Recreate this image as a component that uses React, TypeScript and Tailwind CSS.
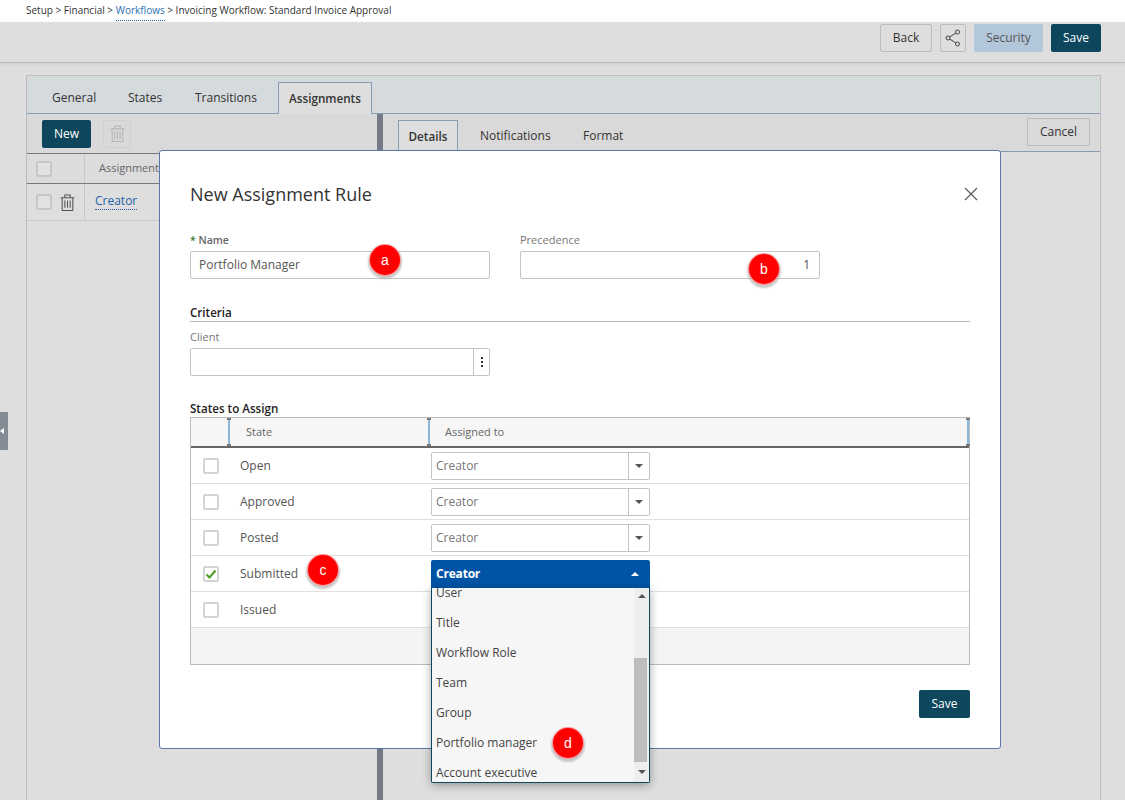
import type { ReactNode } from "react";

const font = "font-['Open_Sans','Liberation_Sans',sans-serif]";

function TrashIcon({ color, className }: { color: string; className: string }) {
  return (
    <svg viewBox="0 0 14 16" className={className} fill="none" stroke={color} strokeWidth="1">
      <path d="M0.5 3.5H13.5M4.5 3.5V1H9.5V3.5M2 3.5V15.5H12V3.5" />
      <path d="M4.5 6V13M7 6V13M9.5 6V13" />
    </svg>
  );
}

function ShareIcon() {
  return (
    <svg viewBox="0 0 16 18" className="w-[16px] h-[18px]" fill="none" stroke="#444" strokeWidth="1">
      <circle cx="3" cy="9" r="2" />
      <circle cx="12.5" cy="3" r="2" />
      <circle cx="12.5" cy="15" r="2" />
      <path d="M4.7 7.9L10.8 4.1M4.7 10.1L10.8 13.9" />
    </svg>
  );
}

function Checkbox({ checked, muted }: { checked?: boolean; muted?: boolean }) {
  return (
    <span
      className={`w-[16px] h-[16px] shrink-0 rounded-[2px] border-2 flex items-center justify-center ${
        muted ? "border-[#c6c6c6] bg-[#e2e2e2]" : "border-[#d4d4d4] bg-white"
      }`}
    >
      {checked && (
        <svg viewBox="0 0 12 12" className="w-[12px] h-[12px]" fill="none" stroke="#4c9a1e" strokeWidth="2">
          <path d="M1.5 6.5L4.5 9.5L10.5 2.5" />
        </svg>
      )}
    </span>
  );
}

function Badge({ label, className }: { label: string; className: string }) {
  return (
    <span
      className={`absolute z-20 w-[32px] h-[32px] rounded-full bg-[#fe0000] text-white text-[14px] font-['Liberation_Sans',sans-serif] flex items-center justify-center shadow-[0_2px_2px_1px_rgba(170,170,170,0.65)] border border-white/60 ${className}`}
    >
      {label}
    </span>
  );
}

function DarkButton({ children, className }: { children: ReactNode; className: string }) {
  return (
    <button className={`h-[28px] rounded-[2px] bg-[#0d465d] text-white text-[12px] ${className}`}>{children}</button>
  );
}

function GreyButton({ children, className }: { children: ReactNode; className: string }) {
  return (
    <button
      className={`h-[28px] rounded-[2px] border border-[#bcbcbc] text-[#333] text-[12px] flex items-center justify-center ${className}`}
    >
      {children}
    </button>
  );
}

function Handle() {
  return (
    <span className="w-[2px] h-full bg-[#8fb4da] relative shrink-0">
      <span className="absolute -left-[1px] top-0 w-[4px] h-[2px] bg-[#777]" />
      <span className="absolute -left-[1px] bottom-0 w-[4px] h-[2px] bg-[#777]" />
    </span>
  );
}

function StateSelect() {
  return (
    <div className="w-[219px] h-[28px] rounded-[2px] border border-[#c4c4c4] flex items-center">
      <span className="flex-1 pl-[4px] text-[12px] text-[#777]">Creator</span>
      <span className="w-[21px] h-full border-l border-[#c4c4c4] flex items-center justify-center">
        <span className="w-0 h-0 border-x-[4px] border-x-transparent border-t-[4px] border-t-[#555]" />
      </span>
    </div>
  );
}

function StateRow({ name, checked, children }: { name: string; checked?: boolean; children?: ReactNode }) {
  return (
    <div className="h-[36px] flex items-center border-b border-[#e0e0e0] relative">
      <div className="w-[49px] pl-[12px] flex items-center">
        <Checkbox checked={checked} />
      </div>
      <div className="w-[191px] text-[12px] text-[#555]">{name}</div>
      {children}
    </div>
  );
}

function Dropdown() {
  const items = ["Title", "Workflow Role", "Team", "Group", "Portfolio manager", "Account executive"];
  return (
    <div className="absolute left-[240px] top-[4px] w-[219px] z-10">
      <div className="h-[28px] rounded-t-[2px] bg-[#0054a6] flex items-center justify-between pl-[5px] pr-[11px]">
        <span className="text-[12px] font-bold text-white tracking-[-0.2px]">Creator</span>
        <span className="w-0 h-0 border-x-[4px] border-x-transparent border-b-[4px] border-b-white" />
      </div>
      <div className="h-[195px] bg-[#f6f6f6] border border-t-0 border-[#0d465d] rounded-b-[2px] shadow-[0_2px_10px_rgba(0,0,0,0.35)] flex overflow-hidden relative">
        <div className="flex-1 pl-[4px] -mt-[10px] text-[12px] text-[#444]">
          <div className="h-[30px] flex items-center">User</div>
          {items.map((item) => (
            <div key={item} className="h-[30px] flex items-center">
              {item}
            </div>
          ))}
        </div>
        <div className="w-[15px] bg-[#eeeeee] flex flex-col items-center relative">
          <span className="mt-[6px] w-0 h-0 border-x-[4px] border-x-transparent border-b-[4px] border-b-[#555]" />
          <span className="absolute left-0 top-[70px] w-[13px] h-[104px] bg-[#bdbdbd]" />
          <span className="absolute bottom-[8px] w-0 h-0 border-x-[4px] border-x-transparent border-t-[4px] border-t-[#555]" />
        </div>
      </div>
    </div>
  );
}

function Modal() {
  return (
    <div className="absolute left-[159px] top-[150px] w-[842px] h-[599px] bg-white border border-[#5a78a6] rounded-[3px] px-[30px]">
      <div className="h-[82px] flex items-start justify-between pt-[31px]">
        <h2 className="text-[18px] leading-[24px] text-[#333]">New Assignment Rule</h2>
        <svg viewBox="0 0 14 14" className="w-[14px] h-[14px] -mr-[8px] mt-[5px]" fill="none" stroke="#555" strokeWidth="1.1">
          <path d="M1 1L13 13M13 1L1 13" />
        </svg>
      </div>

      <div className="flex gap-[30px]">
        <div className="w-[300px]">
          <label className="block h-[19px] leading-[14px] text-[10.5px] font-semibold text-[#666]">
            <span className="text-[#3b7a2b]">*</span> Name
          </label>
          <div className="relative">
            <div className="h-[28px] mt-[-1px] rounded-[2px] border border-[#c4c4c4] flex items-center pl-[8px] text-[12px] text-[#555]">
              Portfolio Manager
            </div>
            <Badge label="a" className="left-[179px] -top-[7px]" />
          </div>
        </div>
        <div className="w-[300px]">
          <label className="block h-[19px] leading-[14px] text-[11px] text-[#777]">Precedence</label>
          <div className="relative">
            <div className="h-[28px] mt-[-1px] rounded-[2px] border border-[#c4c4c4] flex items-center justify-end pr-[9px] text-[12px] text-[#555]">
              1
            </div>
            <Badge label="b" className="left-[228px] top-[2px]" />
          </div>
        </div>
      </div>

      <div className="mt-[26px] h-[17px] border-b border-[#bcbcbc] text-[11.6px] font-semibold leading-[15px] text-[#222]">
        Criteria
      </div>
      <label className="block mt-[8px] h-[14px] leading-[14px] text-[11px] text-[#777]">Client</label>
      <div className="mt-[4px] w-[300px] h-[28px] rounded-[2px] border border-[#c4c4c4] flex justify-end">
        <span className="w-[16px] h-full border-l border-[#c4c4c4] flex flex-col items-center justify-center gap-[2px]">
          <span className="w-[2px] h-[2px] bg-[#333]" />
          <span className="w-[2px] h-[2px] bg-[#333]" />
          <span className="w-[2px] h-[2px] bg-[#333]" />
        </span>
      </div>

      <div className="mt-[25px] h-[16px] leading-[16px] text-[11.6px] font-semibold text-[#222]">States to Assign</div>
      <div className="border border-[#bcbcbc] h-[248px]">
        <div className="h-[30px] bg-[#f6f6f6] border-b-2 border-[#666] flex text-[11px] text-[#666]">
          <div className="w-[37px]" />
          <Handle />
          <div className="w-[198px] pl-[16px] flex items-center">State</div>
          <Handle />
          <div className="flex-1 pl-[15px] flex items-center">Assigned to</div>
          <Handle />
        </div>
        <StateRow name="Open">
          <StateSelect />
        </StateRow>
        <StateRow name="Approved">
          <StateSelect />
        </StateRow>
        <StateRow name="Posted">
          <StateSelect />
        </StateRow>
        <StateRow name="Submitted" checked>
          <Badge label="c" className="left-[116px] top-[-2px]" />
          <Dropdown />
        </StateRow>
        <StateRow name="Issued" />
        <div className="h-[36px] bg-[#f4f4f4]" />
      </div>

      <div className="mt-[25px] flex justify-end">
        <DarkButton className="w-[51px]">Save</DarkButton>
      </div>
      <Badge label="d" className="left-[392px] top-[576px]" />
    </div>
  );
}

export default function App() {
  return (
    <div className={`relative w-[1125px] h-[800px] overflow-hidden bg-[#dedede] flex flex-col ${font}`}>
      <div className="h-[22px] bg-white pl-[26px] text-[10px] leading-[21px] text-[#333] shrink-0">
        Setup &gt; Financial &gt;{" "}
        <span className="text-[#2a6db5] border-b border-dotted border-[#1f5fa8] pb-[3px]">Workflows</span> &gt; Invoicing
        Workflow: Standard Invoice Approval
      </div>

      <div className="h-[41px] shrink-0 border-b border-[#bcbcbc] shadow-[0_1px_3px_rgba(0,0,0,0.08)] flex justify-end items-start pt-[2px] pr-[24px] gap-[8px]">
        <GreyButton className="w-[52px]">Back</GreyButton>
        <GreyButton className="w-[26px]">
          <ShareIcon />
        </GreyButton>
        <button className="h-[28px] w-[69px] rounded-[2px] bg-[#b3c7da] text-[#555] text-[12px]">Security</button>
        <DarkButton className="w-[50px]">Save</DarkButton>
      </div>

      <div className="mt-[12px] ml-[26px] w-[1075px] flex-1 border border-b-0 border-[#bcbcbc] flex flex-col min-h-0">
        <div className="h-[38px] shrink-0 bg-[#d5dadd] border-b border-[#8a9bb5] flex items-end pl-[25px] text-[12px] text-[#333]">
          <span className="w-[76px] h-[31px] flex items-center">General</span>
          <span className="w-[67px] h-[31px] flex items-center">States</span>
          <span className="w-[83px] h-[31px] flex items-center">Transitions</span>
          <span className="w-[94px] h-[32px] -mb-[1px] pt-[1px] bg-[#dedede] border border-b-0 border-[#8a9bb5] flex items-center justify-center font-semibold text-[11.7px]">
            Assignments
          </span>
        </div>

        <div className="flex-1 flex min-h-0">
          <div className="w-[350px] shrink-0 bg-[#dedede]">
            <div className="h-[40px] bg-[#d9d9d9] flex items-center pl-[15px] gap-[12px] border-b border-[#777]">
              <DarkButton className="w-[49px]">New</DarkButton>
              <span className="w-[28px] h-[28px] border border-[#d0d0d0] rounded-[2px] flex items-center justify-center">
                <TrashIcon color="#b5b5b5" className="w-[15px] h-[17px]" />
              </span>
            </div>
            <div className="h-[30px] bg-[#dcdcdc] border-b border-[#777] flex">
              <div className="w-[58px] border-r border-[#c8c8c8] pl-[9px] flex items-center">
                <Checkbox muted />
              </div>
              <div className="pl-[14px] flex items-center text-[11px] text-[#666]">Assignment</div>
            </div>
            <div className="h-[37px] border-b border-[#c8c8c8] flex">
              <div className="w-[58px] border-r border-[#c8c8c8] pl-[9px] flex items-center gap-[8px]">
                <Checkbox muted />
                <TrashIcon color="#555" className="w-[15px] h-[17px]" />
              </div>
              <div className="pl-[10px] pb-[2px] flex items-center text-[12px]">
                <span className="text-[#1f5fa8] border-b border-dotted border-[#1f5fa8] leading-[16px]">Creator</span>
              </div>
            </div>
          </div>

          <div className="w-[6px] shrink-0 bg-[#737a85]" />

          <div className="flex-1">
            <div className="h-[38px] bg-[#d9d9d9] border-b border-[#8a9bb5] flex items-end pl-[15px] pr-[10px] relative text-[12px] text-[#333]">
              <span className="w-[60px] h-[32px] -mb-[1px] bg-[#dedede] border border-b-0 border-[#8a9bb5] flex items-center justify-center font-semibold text-[11.7px]">
                Details
              </span>
              <span className="ml-[22px] w-[103px] h-[31px] flex items-center">Notifications</span>
              <span className="h-[31px] flex items-center">Format</span>
              <GreyButton className="w-[63px] ml-auto self-start mt-[4px]">Cancel</GreyButton>
            </div>
          </div>
        </div>
      </div>

      <div className="absolute left-0 top-[412px] w-[8px] h-[38px] bg-[#838b95] flex items-center">
        <span className="w-0 h-0 border-y-[3px] border-y-transparent border-r-[4px] border-r-white" />
      </div>

      <Modal />
    </div>
  );
}
